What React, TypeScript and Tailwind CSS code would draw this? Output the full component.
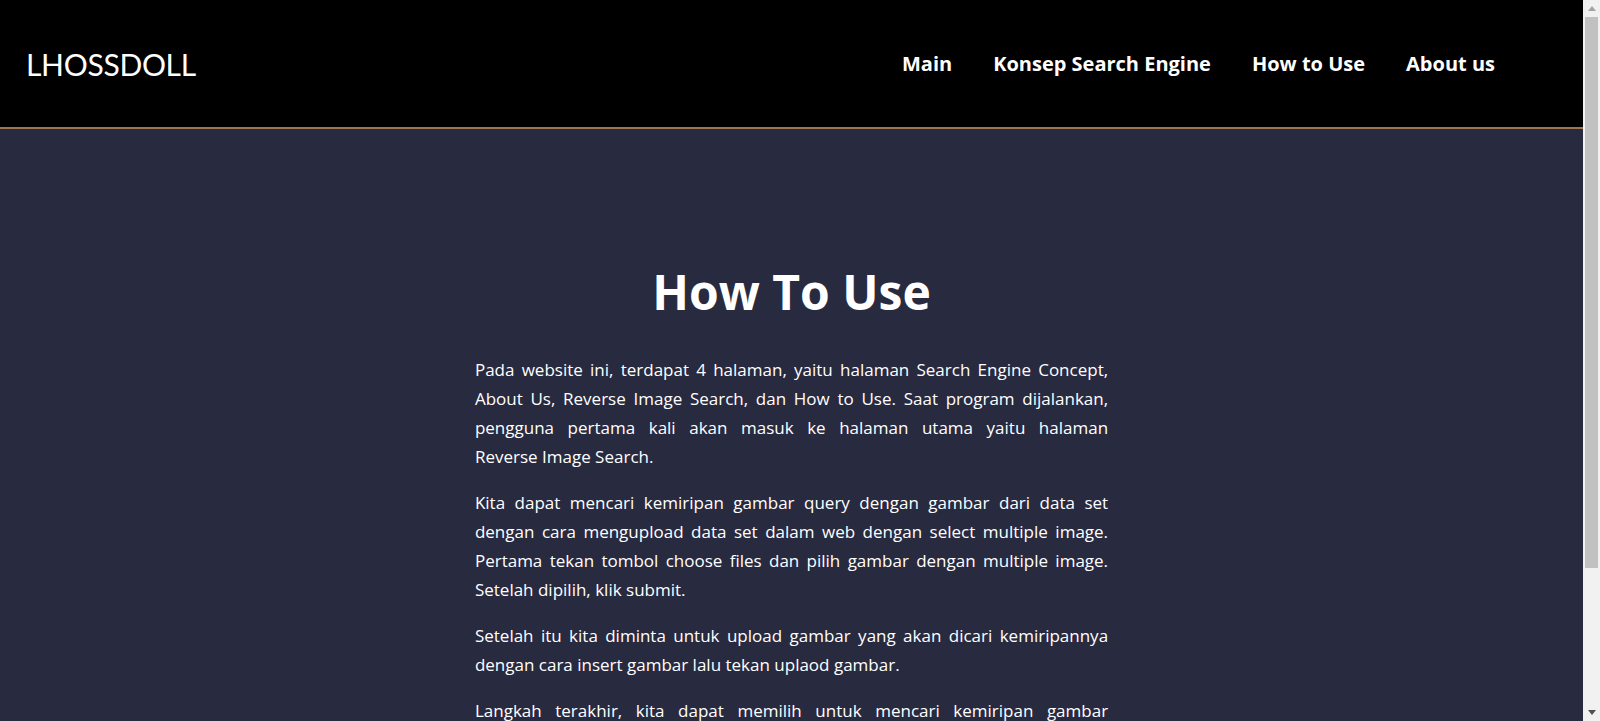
const paragraphs = [
  'Pada website ini, terdapat 4 halaman, yaitu halaman Search Engine Concept, About Us, Reverse Image Search, dan How to Use. Saat program dijalankan, pengguna pertama kali akan masuk ke halaman utama yaitu halaman Reverse\u00A0Image\u00A0Search.',
  'Kita dapat mencari kemiripan gambar query dengan gambar dari data set dengan cara mengupload data set dalam web dengan select multiple image. Pertama tekan tombol choose files dan pilih gambar dengan multiple image. Setelah dipilih, klik submit.',
  'Setelah itu kita diminta untuk upload gambar yang akan dicari kemiripannya dengan cara insert gambar lalu tekan uplaod gambar.',
  'Langkah terakhir, kita dapat memilih untuk mencari kemiripan gambar berdasarkan warna atau tekstur, lalu hasil pencarian akan ditampilkan beserta persentase kemiripannya.',
];

const navItems = ['Main', 'Konsep Search Engine', 'How to Use', 'About us'];

export default function App() {
  return (
    <div className="flex h-screen overflow-hidden bg-[#282a40] text-white font-['Open_Sans','Lato',sans-serif]">
      <div className="flex-1 overflow-hidden">
        <header className="flex h-[129px] items-center justify-between border-b-2 border-[#9b7653] bg-black pl-[26px] pr-[88px]">
          <span className="font-['Lato',sans-serif] text-[30px] leading-none tracking-[-0.3px]">LHOSSDOLL</span>
          <nav className="flex gap-[41px] text-[20px] font-bold">
            {navItems.map((item) => (
              <a key={item} href="#" className="hover:text-[#9b7653]">
                {item}
              </a>
            ))}
          </nav>
        </header>

        <main className="mx-auto w-[40%] pt-[133px] pb-10">
          <h1 className="mb-[33px] text-center text-[48px] font-bold leading-tight">How To Use</h1>
          {paragraphs.map((text, i) => (
            <p key={i} className="mb-[17px] text-justify text-[17px] leading-[29px]">
              {text}
            </p>
          ))}
        </main>
      </div>

      {/* scrollbar */}
      <div className="flex w-[17px] flex-col bg-[#f1f1f1]">
        <div className="flex h-[17px] items-center justify-center">
          <svg width="8" height="5" viewBox="0 0 8 5"><path d="M4 0L8 5H0z" fill="#a3a3a3" /></svg>
        </div>
        <div className="mx-[2px] h-[551px] bg-[#c1c1c1]" />
        <div className="flex-1" />
        <div className="flex h-[17px] items-center justify-center">
          <svg width="8" height="5" viewBox="0 0 8 5"><path d="M0 0H8L4 5z" fill="#505050" /></svg>
        </div>
      </div>
    </div>
  );
}
